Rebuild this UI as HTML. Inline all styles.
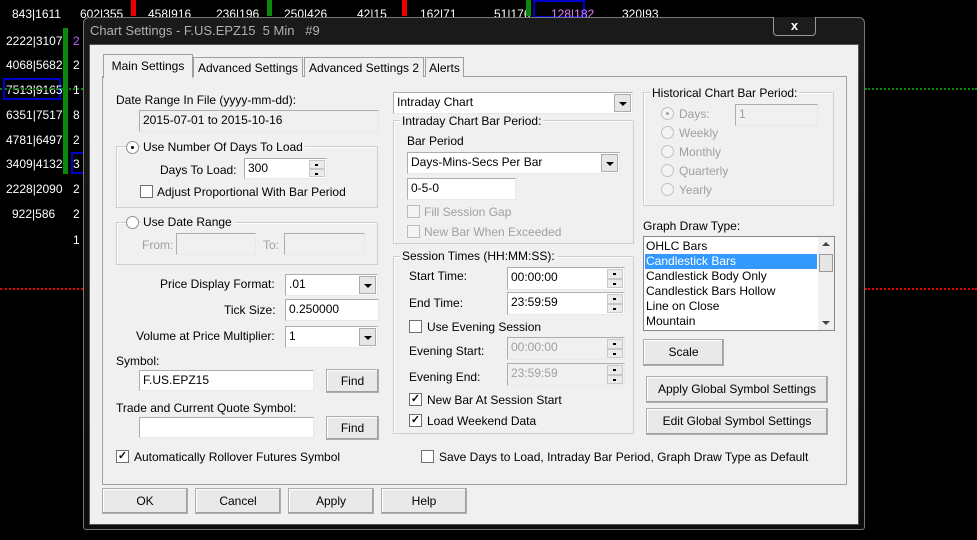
<!DOCTYPE html>
<html><head><meta charset="utf-8">
<style>
*{box-sizing:border-box;margin:0;padding:0}
body{width:977px;height:540px;background:#000;position:relative;overflow:hidden;font-family:"Liberation Sans",sans-serif;font-size:12px;color:#000}
.a{position:absolute;white-space:nowrap}
.n{color:#fff;font-size:12px}
.t{position:absolute;white-space:nowrap;line-height:14px}
.dis{color:#a0a0a0}
.inp{position:absolute;background:#fff;border:1px solid #abadb3;border-right-color:#e3e9ef;border-bottom-color:#e3e9ef;padding:1px 3px;line-height:17px;white-space:nowrap}
.ro{background:#f0f0f0}
.btn{position:absolute;background:#e9e9e9;border:1px solid #adadad;box-shadow:inset -1px -1px 0 #a0a0a0,inset 1px 1px 0 #fff;text-align:center;line-height:22px}
.grp{position:absolute;border:1px solid #c8d0d6;box-shadow:inset 1px 1px 0 #fff}
.gl{position:absolute;background:#f0f0f0;padding:0 2px;line-height:14px;white-space:nowrap}
.cb{position:absolute;width:13px;height:13px;border:1px solid #707070;background:#fff;font-size:11px;line-height:11px;text-align:center;font-weight:bold}
.cbd{border-color:#bcbcbc;background:#f4f4f4}
.rd{position:absolute;width:13px;height:13px;border:1px solid #8f8f8f;border-radius:50%;background:#fff}
.rdd{border-color:#c0c0c0;background:#f4f4f4}
.dd{position:absolute;right:1px;top:1px;bottom:1px;width:17px;background:#e6e6e6;border:1px solid #acacac}
.dd:after{content:"";position:absolute;left:4px;top:7px;border:4px solid transparent;border-top:4px solid #000;border-bottom:0}
.sp{position:absolute;right:1px;top:1px;bottom:1px;width:16px}
.sp i{display:block;height:50%;background:#eaeaea;border:1px solid #c8c8c8;position:relative}
.sp i:after{content:"";position:absolute;left:5px;top:3px;width:3px;height:2px;background:#000}
.tab{position:absolute;background:#f0f0f0;border:1px solid #a0a0a0;border-bottom:none;text-align:center;line-height:20px}
</style></head><body>
<!-- background chart -->
<div class="a n" style="left:12px;top:7px">843|1611</div>
<div class="a n" style="left:6px;top:34px">2222|3107</div>
<div class="a n" style="left:6px;top:58px">4068|5682</div>
<div class="a" style="left:3px;top:78px;width:58px;height:22px;border:2px solid #0000c8"></div>
<div class="a n" style="left:6px;top:83px">7513|9165</div>
<div class="a n" style="left:6px;top:108px">6351|7517</div>
<div class="a n" style="left:6px;top:133px">4781|6497</div>
<div class="a n" style="left:6px;top:157px">3409|4132</div>
<div class="a n" style="left:6px;top:182px">2228|2090</div>
<div class="a n" style="left:12px;top:207px">922|586</div>
<div class="a" style="left:63px;top:28px;width:5px;height:146px;background:#0a8a0a"></div>
<div class="a n" style="left:73px;top:34px;color:#c060ff">2</div>
<div class="a n" style="left:73px;top:58px">2</div>
<div class="a n" style="left:73px;top:83px">1</div>
<div class="a n" style="left:73px;top:108px">8</div>
<div class="a n" style="left:73px;top:133px">2</div>
<div class="a n" style="left:73px;top:157px">3</div>
<div class="a n" style="left:73px;top:182px">2</div>
<div class="a n" style="left:73px;top:207px">2</div>
<div class="a n" style="left:73px;top:233px">1</div>
<div class="a" style="left:71px;top:152px;width:14px;height:22px;border:2px solid #0000c8"></div>
<div class="a n" style="left:80px;top:7px">602|355</div>
<div class="a" style="left:131px;top:0;width:5px;height:16px;background:#e00"></div>
<div class="a n" style="left:148px;top:7px">458|916</div>
<div class="a n" style="left:216px;top:7px">236|196</div>
<div class="a" style="left:267px;top:0;width:5px;height:16px;background:#0a8a0a"></div>
<div class="a n" style="left:284px;top:7px">250|426</div>
<div class="a n" style="left:357px;top:7px">42|15</div>
<div class="a" style="left:402px;top:0;width:5px;height:16px;background:#e00"></div>
<div class="a n" style="left:420px;top:7px">162|71</div>
<div class="a n" style="left:494px;top:7px">51|176</div>
<div class="a" style="left:526px;top:0;width:5px;height:16px;background:#0a8a0a"></div>
<div class="a" style="left:533px;top:0;width:52px;height:18px;border:2px solid #0000c8"></div>
<div class="a n" style="left:551px;top:7px;color:#e080ff">128|182</div>
<div class="a n" style="left:622px;top:7px">320|93</div>
<div class="a" style="left:0;top:88px;width:83px;border-top:2px dotted #0a8a0a"></div>
<div class="a" style="left:865px;top:88px;width:112px;border-top:2px dotted #0a8a0a"></div>
<div class="a" style="left:0;top:288px;width:83px;border-top:2px dotted #e00"></div>
<div class="a" style="left:865px;top:288px;width:112px;border-top:2px dotted #e00"></div>

<!-- dialog frame -->
<div class="a" style="left:83px;top:17px;width:782px;height:513px;background:linear-gradient(#1a1a1a,#0c0c0c);border:1px solid #777;border-radius:6px 6px 3px 3px"></div>
<div class="a" style="left:90px;top:23px;color:#b0b0b0;font-size:13px">Chart Settings - F.US.EPZ15&nbsp; 5 Min&nbsp;&nbsp; #9</div>
<div class="a" style="left:773px;top:17px;width:43px;height:19px;border:1px solid #999;border-top:none;border-radius:0 0 4px 4px;background:#1c1c1c;color:#fff;text-align:center;font-weight:bold;line-height:17px;font-size:13px">x</div>
<div class="a" style="left:89px;top:44px;width:770px;height:481px;background:#f0f0f0;border:1px solid #555"></div>

<!-- tab panel -->
<div class="a" style="left:102px;top:76px;width:745px;height:409px;border:1px solid #a0a0a0;background:#f0f0f0"></div>
<div class="tab" style="left:193px;top:57px;width:110px;height:20px">Advanced Settings</div>
<div class="tab" style="left:304px;top:57px;width:120px;height:20px">Advanced Settings 2</div>
<div class="tab" style="left:425px;top:57px;width:39px;height:20px">Alerts</div>
<div class="tab" style="left:103px;top:54px;width:90px;height:24px;line-height:22px">Main Settings</div>

<!-- left column -->
<div class="t" style="left:116px;top:93px">Date Range In File (yyyy-mm-dd):</div>
<div class="inp ro" style="left:139px;top:110px;width:240px;height:22px">2015-07-01 to 2015-10-16</div>
<div class="grp" style="left:116px;top:146px;width:262px;height:62px"></div>
<div class="rd" style="left:126px;top:141px"><div style="position:absolute;left:4px;top:4px;width:3px;height:3px;background:#000;border-radius:50%"></div></div>
<div class="gl" style="left:141px;top:140px">Use Number Of Days To Load</div>
<div class="t" style="left:160px;top:163px">Days To Load:</div>
<div class="inp" style="left:244px;top:158px;width:83px;height:21px">300<div class="sp"><i></i><i></i></div></div>
<div class="cb" style="left:140px;top:185px"></div>
<div class="t" style="left:157px;top:185px">Adjust Proportional With Bar Period</div>
<div class="grp" style="left:116px;top:222px;width:262px;height:43px"></div>
<div class="rd" style="left:126px;top:216px"></div>
<div class="gl" style="left:141px;top:215px">Use Date Range</div>
<div class="t dis" style="left:142px;top:238px">From:</div>
<div class="inp ro" style="left:176px;top:233px;width:80px;height:22px"></div>
<div class="t dis" style="left:263px;top:238px">To:</div>
<div class="inp ro" style="left:284px;top:233px;width:81px;height:22px"></div>
<div class="t" style="left:160px;top:277px">Price Display Format:</div>
<div class="inp" style="left:285px;top:274px;width:93px;height:22px">.01<div class="dd"></div></div>
<div class="t" style="left:224px;top:303px">Tick Size:</div>
<div class="inp" style="left:285px;top:299px;width:94px;height:22px">0.250000</div>
<div class="t" style="left:136px;top:329px">Volume at Price Multiplier:</div>
<div class="inp" style="left:285px;top:326px;width:93px;height:22px">1<div class="dd"></div></div>
<div class="t" style="left:116px;top:354px">Symbol:</div>
<div class="inp" style="left:139px;top:370px;width:175px;height:21px">F.US.EPZ15</div>
<div class="btn" style="left:326px;top:369px;width:53px;height:24px">Find</div>
<div class="t" style="left:116px;top:401px">Trade and Current Quote Symbol:</div>
<div class="inp" style="left:139px;top:417px;width:175px;height:21px"></div>
<div class="btn" style="left:326px;top:416px;width:53px;height:24px">Find</div>
<div class="cb" style="left:116px;top:450px">✓</div>
<div class="t" style="left:134px;top:450px">Automatically Rollover Futures Symbol</div>

<!-- middle column -->
<div class="inp" style="left:393px;top:92px;width:240px;height:22px">Intraday Chart<div class="dd"></div></div>
<div class="grp" style="left:393px;top:120px;width:241px;height:124px"></div>
<div class="gl" style="left:400px;top:114px">Intraday Chart Bar Period:</div>
<div class="t" style="left:407px;top:134px">Bar Period</div>
<div class="inp" style="left:407px;top:152px;width:213px;height:22px">Days-Mins-Secs Per Bar<div class="dd"></div></div>
<div class="inp" style="left:407px;top:178px;width:109px;height:22px">0-5-0</div>
<div class="cb cbd" style="left:407px;top:205px"></div>
<div class="t dis" style="left:424px;top:205px">Fill Session Gap</div>
<div class="cb cbd" style="left:407px;top:225px"></div>
<div class="t dis" style="left:424px;top:225px">New Bar When Exceeded</div>
<div class="grp" style="left:393px;top:256px;width:241px;height:178px"></div>
<div class="gl" style="left:400px;top:249px">Session Times (HH:MM:SS):</div>
<div class="t" style="left:409px;top:269px">Start Time:</div>
<div class="inp" style="left:507px;top:267px;width:118px;height:23px">00:00:00<div class="sp"><i></i><i></i></div></div>
<div class="t" style="left:409px;top:296px">End Time:</div>
<div class="inp" style="left:507px;top:292px;width:118px;height:23px">23:59:59<div class="sp"><i></i><i></i></div></div>
<div class="cb" style="left:409px;top:320px"></div>
<div class="t" style="left:427px;top:320px">Use Evening Session</div>
<div class="t" style="left:409px;top:344px">Evening Start:</div>
<div class="inp ro dis" style="left:507px;top:337px;width:118px;height:23px">00:00:00<div class="sp"><i></i><i></i></div></div>
<div class="t" style="left:409px;top:370px">Evening End:</div>
<div class="inp ro dis" style="left:507px;top:363px;width:118px;height:23px">23:59:59<div class="sp"><i></i><i></i></div></div>
<div class="cb" style="left:409px;top:393px">✓</div>
<div class="t" style="left:427px;top:393px">New Bar At Session Start</div>
<div class="cb" style="left:409px;top:414px">✓</div>
<div class="t" style="left:427px;top:414px">Load Weekend Data</div>
<div class="cb" style="left:421px;top:450px"></div>
<div class="t" style="left:439px;top:450px">Save Days to Load, Intraday Bar Period, Graph Draw Type as Default</div>

<!-- right column -->
<div class="grp" style="left:643px;top:92px;width:191px;height:114px"></div>
<div class="gl" style="left:650px;top:86px">Historical Chart Bar Period:</div>
<div class="rd rdd" style="left:661px;top:107px"><div style="position:absolute;left:4px;top:4px;width:3px;height:3px;background:#a0a0a0;border-radius:50%"></div></div>
<div class="t dis" style="left:679px;top:107px">Days:</div>
<div class="inp ro dis" style="left:735px;top:104px;width:83px;height:22px">1</div>
<div class="rd rdd" style="left:661px;top:126px"></div><div class="t dis" style="left:679px;top:126px">Weekly</div>
<div class="rd rdd" style="left:661px;top:145px"></div><div class="t dis" style="left:679px;top:145px">Monthly</div>
<div class="rd rdd" style="left:661px;top:164px"></div><div class="t dis" style="left:679px;top:164px">Quarterly</div>
<div class="rd rdd" style="left:661px;top:183px"></div><div class="t dis" style="left:679px;top:183px">Yearly</div>
<div class="t" style="left:643px;top:219px">Graph Draw Type:</div>
<div class="a" style="left:643px;top:236px;width:192px;height:95px;background:#fff;border:1px solid #828790;overflow:hidden">
 <div style="position:absolute;left:2px;top:2px;line-height:15px">OHLC Bars<br><span style="display:inline-block;width:172px;background:#3399ff;color:#fff;margin-left:-1px;padding-left:1px">Candlestick Bars</span><br>Candlestick Body Only<br>Candlestick Bars Hollow<br>Line on Close<br>Mountain</div>
 <div style="position:absolute;right:0;top:0;width:16px;height:93px;background:#f0f0f0"></div>
 <div style="position:absolute;right:1px;top:17px;width:14px;height:18px;background:#e6e6e6;border:1px solid #9a9a9a"></div>
 <div style="position:absolute;right:4px;top:5px;border:4px solid transparent;border-bottom:4px solid #444;border-top:0"></div>
 <div style="position:absolute;right:4px;bottom:5px;border:4px solid transparent;border-top:4px solid #444;border-bottom:0"></div>
</div>
<div class="btn" style="left:643px;top:339px;width:81px;height:27px;line-height:25px">Scale</div>
<div class="btn" style="left:646px;top:376px;width:182px;height:27px;line-height:25px">Apply Global Symbol Settings</div>
<div class="btn" style="left:646px;top:408px;width:182px;height:27px;line-height:25px">Edit Global Symbol Settings</div>

<!-- bottom buttons -->
<div class="btn" style="left:102px;top:488px;width:86px;height:26px;line-height:24px">OK</div>
<div class="btn" style="left:195px;top:488px;width:86px;height:26px;line-height:24px">Cancel</div>
<div class="btn" style="left:288px;top:488px;width:86px;height:26px;line-height:24px">Apply</div>
<div class="btn" style="left:381px;top:488px;width:86px;height:26px;line-height:24px">Help</div>
</body></html>
